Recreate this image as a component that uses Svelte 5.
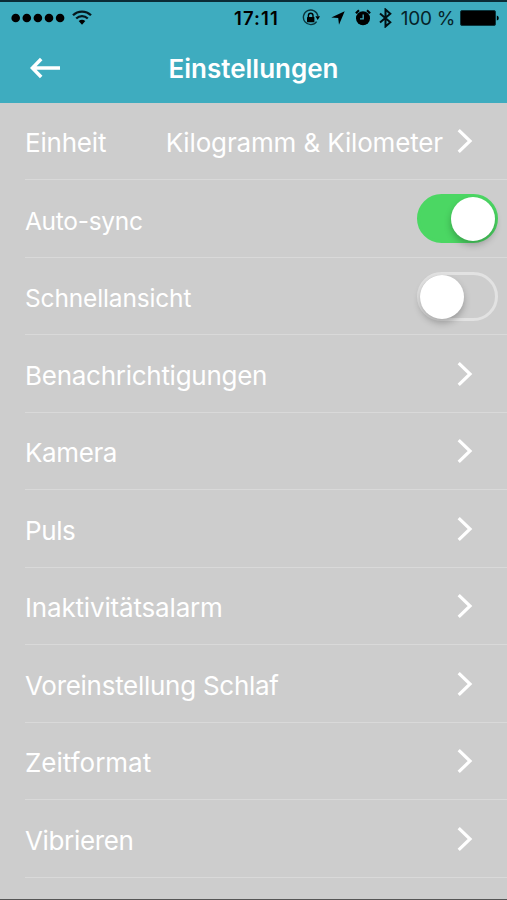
<script lang="ts">
  type Row = {
    label: string;
    spacing: number;
    value?: string;
    toggle?: boolean;
    on?: boolean;
  };

  let rows: Row[] = $state([
    { label: 'Einheit', spacing: -0.2, value: 'Kilogramm & Kilometer' },
    { label: 'Auto-sync', spacing: -0.3, toggle: true, on: true },
    { label: 'Schnellansicht', spacing: -0.15, toggle: true, on: false },
    { label: 'Benachrichtigungen', spacing: -0.27 },
    { label: 'Kamera', spacing: -0.4 },
    { label: 'Puls', spacing: -0.4 },
    { label: 'Inaktivitätsalarm', spacing: -0.17 },
    { label: 'Voreinstellung Schlaf', spacing: -0.28 },
    { label: 'Zeitformat', spacing: 0 },
    { label: 'Vibrieren', spacing: -0.35 }
  ]);
</script>

<div class="screen">
  <header>
    <div class="status-bar">
      <div class="signal">
        <svg class="dots" width="54" height="10" viewBox="0 0 54 10">
          {#each [0, 1, 2, 3, 4] as i}
            <circle cx={4.7 + i * 11.1} cy="5" r="4.3" />
          {/each}
        </svg>
        <svg width="20" height="15" viewBox="0 0 20 15">
          <path d="M1 5.2C6 .3 14 .3 19 5.2M4.2 8.5c3.3-3.2 8.3-3.2 11.6 0" fill="none" stroke="#06181c" stroke-width="2.3" />
          <path d="M6.7 11.1q3.3-2.8 6.6 0L10 14.7z" />
        </svg>
      </div>
      <span class="time">17:11</span>
      <div class="indicators">
        <svg class="lock" width="18" height="18" viewBox="0 0 18 18">
          <path d="M14.6 12.6A7.3 7.3 0 1 1 15.9 7" fill="none" stroke="#0b353d" stroke-width="1.4" />
          <path d="M13.4 7.3h4.6l-2.3 3.6z" />
          <rect x="5" y="8" width="7.4" height="5.2" rx=".5" />
          <path d="M6.4 8V6.5a2.3 2.3 0 0 1 4.6 0V8" fill="none" stroke="#000" stroke-width="1.4" />
        </svg>
        <svg class="location" width="14" height="14" viewBox="0 0 14 14">
          <path d="M13.7.3 8 13.7 7.2 7 .3 6.5z" />
        </svg>
        <svg class="alarm" width="16" height="17" viewBox="0 0 16 17">
          <circle cx="8" cy="9.3" r="7" />
          <path d="M.9 4.2 4 1.3M15.1 4.2 12 1.3" stroke="#000" stroke-width="2.2" />
          <path d="M8.2 5.5v4.3H5" fill="none" stroke="#3eacbf" stroke-width="1.3" />
        </svg>
        <svg class="bluetooth" width="13" height="20" viewBox="0 0 13 20">
          <path d="M1 5.4 11.3 14.3 6.5 18.5V1.5l4.8 4.2L1 14.6" fill="none" stroke="#021013" stroke-width="2" />
        </svg>
        <span class="percent">100 %</span>
        <svg width="39" height="16" viewBox="0 0 39 16">
          <rect x=".5" y=".5" width="35" height="15" rx="1.5" stroke="#0b353d" />
          <path d="M36.8 5.5q2 .5 2 2.5t-2 2.5z" />
        </svg>
      </div>
    </div>
    <div class="nav-bar">
      <button class="back" aria-label="Zurück">
        <svg width="32" height="22" viewBox="0 0 32 22">
          <path d="M11.2 2 2.4 11l8.8 9M2.8 11H30" fill="none" stroke="#fff" stroke-width="3.5" />
        </svg>
      </button>
      <h1>Einstellungen</h1>
    </div>
  </header>

  <ul class="settings">
    {#each rows as row}
      <li class="row">
        <span class="label" class:compact={row.toggle} style="letter-spacing: {row.spacing}px">{row.label}</span>
        {#if row.toggle}
          <button
            class="switch"
            class:on={row.on}
            role="switch"
            aria-checked={row.on}
            aria-label={row.label}
            onclick={() => (row.on = !row.on)}
          >
            <span class="knob"></span>
          </button>
        {:else}
          <span class="value">{row.value ?? ''}</span>
          <svg class="chevron" width="16" height="24" viewBox="0 0 16 24">
            <path d="M1.7 1.2 13 12 1.7 22.8" fill="none" stroke="#fff" stroke-width="3.2" />
          </svg>
        {/if}
      </li>
    {/each}
  </ul>
</div>

<style>
  :global(body) {
    margin: 0;
  }

  .screen {
    box-sizing: border-box;
    width: 507px;
    height: 900px;
    overflow: hidden;
    background: #cdcdcd;
    border-bottom: 1px solid #555;
    font-family: Inter, 'Liberation Sans', sans-serif;
    color: #fff;
  }

  svg {
    display: block;
    flex-shrink: 0;
  }

  button {
    padding: 0;
    border: 0;
    background: none;
  }

  header {
    box-sizing: border-box;
    height: 102.5px;
    background: #3eacbf;
    border-top: 2px solid #0b2c36;
  }

  .status-bar {
    display: grid;
    grid-template-columns: 1fr auto 1fr;
    align-items: center;
    height: 31px;
    padding: 0 8px 0 11px;
    color: #000;
  }

  .signal, .indicators {
    display: flex;
    align-items: center;
  }

  .signal {
    gap: 7px;
  }

  .dots {
    overflow: visible;
  }

  .indicators {
    justify-content: flex-end;
  }

  .time {
    padding-left: 3px;
    font-size: 18.5px;
    font-weight: 600;
    letter-spacing: 1.1px;
  }

  .lock {
    margin-right: 11px;
  }

  .location {
    margin-right: 10px;
  }

  .alarm {
    margin-right: 8px;
  }

  .bluetooth {
    margin-right: 9px;
  }

  .percent {
    margin-right: 5px;
    padding-top: 1px;
    font-size: 19px;
    letter-spacing: -0.3px;
    white-space: nowrap;
    color: #06242a;
  }

  .nav-bar {
    display: grid;
    grid-template-columns: 62px 1fr 62px;
    align-items: center;
    height: 69px;
  }

  .back {
    justify-self: end;
  }

  h1 {
    margin: 0;
    padding-top: 2px;
    text-align: center;
    font-size: 26px;
    font-weight: 600;
    line-height: 32px;
  }

  .settings {
    margin: 0;
    padding: 0 0 0 25px;
    list-style: none;
  }

  .row {
    box-sizing: border-box;
    display: flex;
    align-items: center;
    height: 77.5px;
    padding-top: 5px;
    border-bottom: 1px solid #d9d9d9;
  }

  .label, .value {
    font-size: 26px;
    line-height: 32px;
    white-space: nowrap;
  }

  .compact {
    font-size: 24.5px;
  }

  .value {
    margin-left: auto;
    letter-spacing: -0.15px;
  }

  .chevron {
    margin: 0 34px 4px 14px;
  }

  .switch {
    box-sizing: border-box;
    display: flex;
    width: 81px;
    height: 49px;
    margin: 0 9px 4px auto;
    padding: 0;
    border: 3px solid #e2e2e2;
    border-radius: 25px;
  }

  .switch.on {
    justify-content: flex-end;
    border-color: #4bd763;
    background: #4bd763;
  }

  .knob {
    width: 44px;
    height: 44px;
    border-radius: 50%;
    background: #fff;
    box-shadow: 0 4px 7px rgba(0, 0, 0, 0.25);
  }
</style>
